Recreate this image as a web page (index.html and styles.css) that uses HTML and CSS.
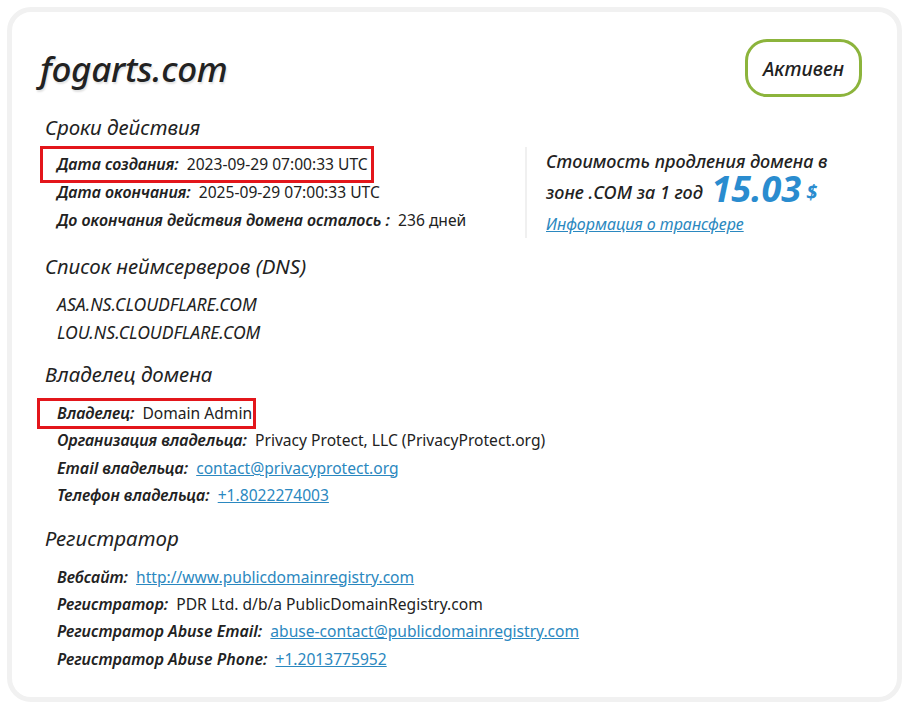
FILE: index.html
```html
<!DOCTYPE html>
<html lang="ru">
<head>
  <meta charset="UTF-8" />
  <meta name="viewport" content="width=device-width, initial-scale=1" />
  <title>fogarts.com - Whois</title>
  <link rel="stylesheet" href="styles.css">
</head>
<body>

  <div class="card">

    <div class="card-head">
      <h1 class="domain">fogarts.com</h1>
      <div class="status">Активен</div>
    </div>

    <h2 class="section-title">Сроки действия</h2>
    <div class="dates">
      <div class="rows rows-dates">
        <div class="row"><span class="marked"><b>Дата создания:</b> 2023-09-29 07:00:33 UTC</span></div>
        <div class="row"><b>Дата окончания:</b> 2025-09-29 07:00:33 UTC</div>
        <div class="row"><b>До окончания действия домена осталось :</b> 236 дней</div>
      </div>
      <div class="renew">
        <p class="renew-line">Стоимость продления домена в</p>
        <p class="renew-line renew-price">зоне .COM за 1 год <span class="price">15.03</span><span class="currency">$</span></p>
        <p class="renew-line"><a class="transfer" href="#">Информация о трансфере</a></p>
      </div>
    </div>

    <h2 class="section-title">Список неймсерверов (DNS)</h2>
    <div class="rows rows-ns">
      <div class="row ns">ASA.NS.CLOUDFLARE.COM</div>
      <div class="row ns">LOU.NS.CLOUDFLARE.COM</div>
    </div>

    <h2 class="section-title">Владелец домена</h2>
    <div class="rows">
      <div class="row"><span class="marked marked-owner"><b>Владелец:</b> Domain Admin</span></div>
      <div class="row"><b>Организация владельца:</b> Privacy Protect, LLC (PrivacyProtect.org)</div>
      <div class="row"><b>Email владельца:</b> <a href="#">contact@privacyprotect.org</a></div>
      <div class="row"><b>Телефон владельца:</b> <a href="#">+1.8022274003</a></div>
    </div>

    <h2 class="section-title">Регистратор</h2>
    <div class="rows">
      <div class="row"><b>Вебсайт:</b> <a href="#">http://www.publicdomainregistry.com</a></div>
      <div class="row"><b>Регистратор:</b> PDR Ltd. d/b/a PublicDomainRegistry.com</div>
      <div class="row"><b>Регистратор Abuse Email:</b> <a href="#">abuse-contact@publicdomainregistry.com</a></div>
      <div class="row"><b>Регистратор Abuse Phone:</b> <a href="#">+1.2013775952</a></div>
    </div>

  </div>

</body>
</html>
```

FILE: styles.css
```css
:root {
  --text-color: #222;
  --link-color: #2b88c0;
  --price-color: #2a8ccf;
  --status-color: #8cb43c;
  --mark-color: #e3161b;
  --card-border: #f1f1f1;
  --font-main: 'Noto Sans', 'Open Sans', Arial, sans-serif;
}

body {
  margin: 0;
  background: #fff;
  color: var(--text-color);
  font-family: var(--font-main);
}

.card {
  margin: 7px 8px 6px 7px;
  border: 5px solid var(--card-border);
  border-radius: 24px;
  padding: 27px 35px 24px 28px;
  min-height: 600px;
}

.card-head {
  display: flex;
  justify-content: space-between;
  align-items: center;
  height: 58px;
}

.domain {
  margin: 0;
  font-size: 35px;
  font-style: italic;
  font-weight: 500;
  letter-spacing: -0.3px;
  text-shadow: 1px 2px 2px rgba(0, 0, 0, 0.12);
}

.status {
  box-sizing: border-box;
  height: 58px;
  width: 117px;
  border: 3px solid var(--status-color);
  border-radius: 22px;
  display: flex;
  align-items: center;
  justify-content: center;
  font-size: 19.5px;
  font-style: italic;
  font-weight: 500;
}

.section-title {
  margin: 14px 0 0 5px;
  font-size: 20.5px;
  line-height: 28px;
  font-style: italic;
  font-weight: 400;
}

.card-head + .section-title {
  margin-top: 16px;
}

.rows {
  margin-top: 12px;
  padding-left: 17px;
  font-size: 15.6px;
}

.row {
  line-height: 27.4px;
  white-space: nowrap;
}

.row b {
  font-style: italic;
  font-weight: 600;
  font-size: 16px;
  margin-right: 4px;
}

.ns {
  font-style: italic;
  font-size: 17.6px;
  line-height: 28px;
}

a {
  color: var(--link-color);
}

/* rouge : lignes mises en évidence */
.marked {
  position: relative;
  display: inline-block;
}

.marked::after {
  content: '';
  position: absolute;
  top: -4px;
  bottom: -5px;
  left: -17px;
  right: -6px;
  border: 3px solid var(--mark-color);
}

.marked-owner::after {
  top: -2px;
  bottom: -2px;
  left: -20px;
  right: -4px;
}

/* bloc dates + prix */
.dates {
  display: flex;
  margin-top: 6px;
}

.rows-dates {
  margin-top: 0;
  padding-top: 3px;
  width: 468px;
  flex: none;
}

.rows-dates .row {
  line-height: 28px;
}

.renew {
  border-left: 2px solid #f0f0f0;
  padding-left: 19px;
  font-style: italic;
  font-size: 18px;
  font-weight: 500;
}

.renew-line {
  margin: 0;
  line-height: 28px;
}

.renew-price {
  line-height: 34px;
}

.price {
  display: inline-block;
  color: var(--price-color);
  font-size: 36px;
  font-weight: 700;
  margin-left: 4px;
  line-height: 26px;
  vertical-align: -3px;
}

.currency {
  color: var(--price-color);
  font-size: 20px;
  font-weight: 700;
  margin-left: 5px;
}

.transfer {
  font-size: 16px;
  font-weight: 400;
}

.rows-ns {
  margin-top: 10px;
}
```
